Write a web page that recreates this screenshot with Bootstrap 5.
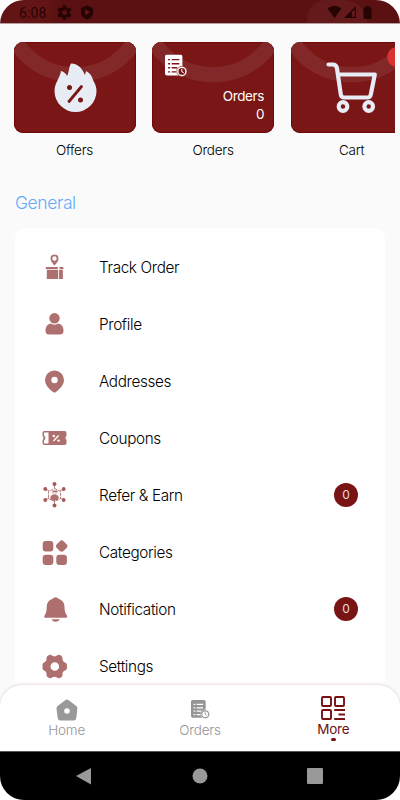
<!DOCTYPE html>
<html lang="en">
<head>
<meta charset="utf-8">
<meta name="viewport" content="width=device-width, initial-scale=1">
<title>More</title>
<link href="https://cdn.jsdelivr.net/npm/bootstrap@5.3.0/dist/css/bootstrap.min.css" rel="stylesheet">
<style>
body{font-family:Inter,"Liberation Sans",sans-serif;font-weight:300;color:#000;background:#fff}
svg{display:block;flex:none}
.phone{width:400px;height:800px;border-radius:24px;background:#fafafa}
.status{height:24px;background:linear-gradient(100deg,#631515 0 11%,#5b1111 15%);border-bottom:1px solid #b79f9f;color:#260404;font:400 14px Roboto,sans-serif;padding:2px 0 0 19px}
.status .clock{width:37px;line-height:22px;letter-spacing:.1px}
.glow{left:307px;top:0;width:60px;height:23px;background:#641a1a;border-radius:20px 24px 0 0}
.tiles{padding:17.5px 0 0 13.5px;margin-right:5px;gap:16.6px}
.tile{width:122px;flex:none}
.tile-face{height:91.5px;border-radius:9px;background:#7b1616;box-shadow:inset 0 0 0 1px #700808}
.tile-name{font-size:13.5px;line-height:20px;margin-top:7px;letter-spacing:-.22px}
.tile-info{right:10px;top:46.5px;font-size:13.5px;line-height:17.5px;font-weight:400;letter-spacing:-.35px}
.dot{width:20px;height:20px;left:96px;top:5.5px;background:#d93030}
.heading{font-size:17.5px;line-height:26px;color:#64acfa;margin:30px 0 0 15px;letter-spacing:-.4px}
.menu{margin:12px 15px 0;border-radius:11px;padding:10px 27px 0 26px;height:520px}
.entry{height:57px;padding-top:3px;font-size:15.3px;letter-spacing:-.36px}
.entry svg{margin:-3px 30px 0 0;color:#ae706f}
.count{width:24px;height:24px;margin-top:-3px;background:#781414;color:#eadada;font-size:12px;font-weight:400;letter-spacing:0}
.tabs{bottom:49px;left:0;height:66px;border-radius:22px 22px 0 0;box-shadow:0 -1px 3px #e6dadb}
.tab{width:133.33px;color:#959595;font-size:13.5px;line-height:19px;letter-spacing:-.2px}
.tab.current{color:#701014;line-height:17px}
.pip{width:5px;height:3px;background:#781014}
.system{bottom:0;left:0;height:49px;background:#000;border-top:1px solid #555}
</style>
<script src="https://cdn.jsdelivr.net/npm/bootstrap@5.3.0/dist/js/bootstrap.bundle.min.js"></script>
</head>
<body>
<svg width="0" height="0" class="position-absolute">
<symbol id="orders" viewBox="0 0 22 22"><path fill="currentColor" d="M2 0h13q2 0 2 2v10.2A5 5 0 0 0 13.5 20.500H2q-2 0-2-2V2Q0 0 2 0z"/><g stroke="var(--gap)" stroke-width="1.400"><path d="M3 5h2M6.500 5h7.500M3 9h2M6.500 9h7.500M3 13h2M6.500 13h5.500M3 17h2M6.500 17h4.500"/></g><circle cx="16.500" cy="16.500" r="5" fill="currentColor" stroke="var(--gap)" stroke-width=".6"/><circle cx="16.500" cy="16.500" r="3.300" fill="var(--gap)"/><path d="M16.500 14v2.700l1.800 1.300" fill="none" stroke="currentColor"/></symbol>
<symbol id="ring" viewBox="0 0 122 92"><circle cx="61" cy="-37" r="70" fill="none" stroke="#832828" stroke-width="15.500"/></symbol>
</svg>
<div class="phone position-relative overflow-hidden">
  <header class="status position-relative d-flex">
    <div class="glow position-absolute"></div>
    <span class="clock">6:08</span>
    <svg style="margin:3px 0 0 1px" width="15" height="15" viewBox="4 3 18 18"><path fill="#260404" fill-rule="evenodd" d="M19.400 13c.1-.7.1-1.300 0-2l2.100-1.600-2-3.500-2.500 1a8 8 0 0 0-1.700-1L15 3.300h-4l-.4 2.600a8 8 0 0 0-1.700 1l-2.400-1-2 3.500L6.600 11c-.1.700-.1 1.300 0 2l-2.100 1.600 2 3.500 2.400-1a8 8 0 0 0 1.700 1l.4 2.600h4l.3-2.600a8 8 0 0 0 1.700-1l2.500 1 2-3.500zM13 9a3 3 0 1 1 0 6 3 3 0 0 1 0-6z"/></svg>
    <svg style="margin-left:8px" width="14" height="20" viewBox="0 0 14 20"><path fill="#260404" d="M7 3.500 13 6v4.500q0 4.800-6 7-6-2.200-6-7V6z"/><path fill="#691616" d="m5.200 7.200 5 3-5 3z"/></svg>
    <svg class="position-absolute" style="left:326px;top:3px" width="48" height="18" viewBox="0 0 48 18"><g fill="#260404"><path d="M1.500 5.500q7-5.500 14 0L8.500 15z"/><path fill-rule="evenodd" d="M30 3v12H18zM28.800 6v7.800h-3V9z"/><path d="M37.500 4.500h2V3h4v1.500h2V16h-8z"/></g></svg>
  </header>

  <main>
    <section class="tiles d-flex overflow-hidden">
      <div class="tile text-center">
        <div class="tile-face position-relative overflow-hidden">
          <svg width="122" height="91.500"><use href="#ring"/><path fill="#e7ecf5" d="M40.500 49C40.500 41 46 36 47 29c3 1 5 2.500 6 5C55 31 55 24 57 21.500c8 .5 11 5 14 11.500l1-4c6 3 6 7 7.500 10 1.800 3 3 6 3 10A21 21 0 0 1 40.500 49z"/><path stroke="#7b1616" stroke-width="2.800" stroke-linecap="round" d="M55 59.500 67.500 44.500"/><g fill="#7b1616"><circle cx="55.500" cy="45.500" r="2.500"/><circle cx="66.500" cy="58" r="2.500"/></g></svg>
        </div>
        <div class="tile-name">Offers</div>
      </div>
      <div class="tile text-center">
        <div class="tile-face position-relative overflow-hidden text-white">
          <svg width="122" height="91.500" style="--gap:#7b1616"><use href="#ring"/><use href="#orders" x="13" y="12.500" width="22.500" height="22.500"/></svg>
          <div class="tile-info position-absolute text-end">Orders<br>0</div>
        </div>
        <div class="tile-name">Orders</div>
      </div>
      <div class="tile text-center">
        <div class="tile-face position-relative overflow-hidden">
          <svg width="122" height="91.500"><use href="#ring"/><g fill="none" stroke="#e7ecf5" stroke-width="4.200" stroke-linecap="round" stroke-linejoin="round"><path d="M37.500 22.500h4q4 0 4.500 4l3.800 26q.4 3 3.500 3h23q3 0 3.500-3l4-20H47"/><circle cx="52" cy="64.500" r="4.300"/><circle cx="77.700" cy="64.500" r="4.300"/></g></svg>
          <span class="dot position-absolute rounded-circle"></span>
        </div>
        <div class="tile-name">Cart</div>
      </div>
    </section>

    <h1 class="heading fw-light">General</h1>
    <div class="menu bg-white">
      <div class="entry d-flex align-items-center">
        <svg width="28" height="28" viewBox="0 0 28 28" fill="currentColor"><path fill-rule="evenodd" d="M13.500 1.500a4 4 0 0 1 4 4q0 3-4 7-4-4-4-7a4 4 0 0 1 4-4zm0 1.800a2.200 2.200 0 1 0 0 4.400 2.200 2.200 0 0 0 0-4.400z"/><path d="M5 14h12l-.5 2H4.500zM18.300 14H22l.8 2h-4zM5.800 16.700h11.400V26H5.800zM18.100 16.700h3.800V26h-3.800z"/></svg>Track Order
      </div>
      <div class="entry d-flex align-items-center">
        <svg width="28" height="28" viewBox="0 0 28 28" fill="currentColor"><circle cx="13.500" cy="8.200" r="5.200"/><path d="M10 13.500q3.500 2.500 7 0 5.500.5 5.500 7.500 0 3.500-4 3.500h-10q-4 0-4-3.500 0-7 5.500-7.500z"/></svg>Profile
      </div>
      <div class="entry d-flex align-items-center">
        <svg width="28" height="28" viewBox="0 0 28 28" fill="currentColor"><path fill-rule="evenodd" d="M13.500 3.500a9.500 9.500 0 0 1 9.500 9.500c0 5-4 8.700-8 12q-1.500 1.200-3 0c-4-3.300-8-7-8-12a9.500 9.500 0 0 1 9.500-9.500zm0 6.300a3.200 3.200 0 1 0 0 6.400 3.200 3.200 0 0 0 0-6.400z"/></svg>Addresses
      </div>
      <div class="entry d-flex align-items-center">
        <svg width="28" height="28" viewBox="0 0 28 28"><path fill="currentColor" d="M3.500 7h20q2 0 2 2v3q-2 2 0 4v3q0 2-2 2h-20q-2 0-2-2v-3q2-2 0-4V9q0-2 2-2z"/><path fill="#fff" d="M3 8.500h4.500v11H3v-3q3-2.500 0-5z"/><path stroke="#fff" stroke-width="1.300" d="m12.500 17 5-5.500"/><g fill="#fff"><circle cx="12.800" cy="12" r="1.200"/><circle cx="17.600" cy="16.600" r="1.200"/></g></svg>Coupons
      </div>
      <div class="entry d-flex align-items-center">
        <svg width="28" height="28" viewBox="0 0 28 28" fill="currentColor"><g stroke="currentColor" stroke-width=".9" fill="none"><path d="M13.500 3v4.500M4.500 8 8 10M22.500 8 19 10M4.500 19 8 17M22.500 19 19 17M13.500 19v6"/><path stroke-dasharray="3 1" d="m13.500 7.500 6 3v7l-6 3-6-3v-7z"/></g><g fill="#a65858"><circle cx="13.500" cy="3" r="2"/><circle cx="4.300" cy="8" r="1.900"/><circle cx="22.700" cy="8" r="1.900"/><circle cx="4.300" cy="19" r="1.900"/><circle cx="22.700" cy="19" r="1.900"/><circle cx="13.500" cy="24.500" r="2"/></g><path d="M11.500 9.500h5v1.800h-5zM9.300 17q0-3 2.500-3h3.400q2.500 0 2.500 3l-1.200 2.500h-6z"/><path d="M12 11v2.500h3V11" fill="none" stroke="currentColor" stroke-width=".6"/></svg>Refer &amp; Earn
        <span class="count rounded-circle d-flex align-items-center justify-content-center ms-auto">0</span>
      </div>
      <div class="entry d-flex align-items-center">
        <svg width="28" height="28" viewBox="0 0 28 28" fill="currentColor"><rect x="1.700" y="3" width="10.600" height="10.600" rx="3"/><rect x="1.700" y="16.800" width="10.600" height="10.200" rx="3"/><rect x="15.300" y="16.800" width="10.600" height="10.200" rx="3"/><rect x="15.900" y="3.300" width="9.600" height="9.600" rx="3" transform="rotate(45 20.700 8.100)"/></svg>Categories
      </div>
      <div class="entry d-flex align-items-center">
        <svg width="28" height="28" viewBox="0 0 28 28" fill="currentColor"><path d="M14.500 2.200q2 0 3 1.500 6 2 6 8 0 6 2.500 8.800.8 2.200-1 2.200H4.500q-2 0-1-2.200Q5.700 17.700 5.700 11.700q0-6 6-8Q12.500 2.200 14.500 2.200zM10.500 24.300h8.300q-1.300 2.500-4.200 2.500t-4.100-2.500z"/></svg>Notification
        <span class="count rounded-circle d-flex align-items-center justify-content-center ms-auto">0</span>
      </div>
      <div class="entry d-flex align-items-center">
        <svg width="28" height="28" viewBox="0 0 28 28" fill="currentColor"><path fill-rule="evenodd" d="M8 2.600q1.500-.9 3 .3 2.500 1.800 5 0 1.500-1.200 3-.3l1.500.9q1.300 1 1 2.500-.3 2.800 2.500 4 2 .7 2 2.200v3.600q0 1.500-2 2.200-2.800 1.200-2.500 4 .3 1.500-1 2.500l-1.500.9q-1.500.9-3-.3-2.500-1.800-5 0-1.500 1.200-3 .3l-1.500-.9q-1.300-1-1-2.500.3-2.800-2.500-4-1.500-.7-1.500-2.200v-3.600q0-1.500 1.500-2.200 2.800-1.200 2.500-4-.3-1.500 1-2.500zm5.800 7.100a4.300 4.300 0 1 0 0 8.600 4.300 4.300 0 0 0 0-8.600z" transform="translate(0 .5)"/></svg>Settings
      </div>
    </div>
  </main>

  <nav class="tabs position-absolute w-100 bg-white d-flex">
    <div class="tab d-flex flex-column align-items-center pt-3">
      <svg style="margin-top:-2px" width="22" height="22" viewBox="0 0 22 22"><path fill="#999" fill-rule="evenodd" d="M9.300 1.200q1.700-1.200 3.400 0l7.300 5.600q1.600 1.200 1.400 3L20.300 19q-.4 2.500-2.800 2.500h-13Q2.100 21.500 1.700 19L.5 9.800q-.2-1.800 1.400-3zM11 9.200a2.800 2.800 0 1 0 0 5.600 2.800 2.800 0 0 0 0-5.600z"/></svg>
      <span>Home</span>
    </div>
    <div class="tab d-flex flex-column align-items-center pt-3">
      <svg style="--gap:#fff;margin:-1px -2px 0 0" width="19" height="21"><use href="#orders" y="0" width="19" height="19"/></svg>
      <span>Orders</span>
    </div>
    <div class="tab current d-flex flex-column align-items-center">
      <svg style="margin-top:10px" width="26" height="26" viewBox="0 0 26 26" fill="none" stroke="#781014" stroke-width="1.900"><rect x="2" y="2" width="9" height="9" rx="1"/><rect x="15" y="2" width="9" height="9" rx="1"/><rect x="2" y="15" width="9" height="9" rx="1"/><path d="M14.200 15H25M18.500 19.500H25M14.200 24H25"/></svg>
      <span class="fw-normal">More</span>
      <span class="pip rounded-pill"></span>
    </div>
  </nav>
  <footer class="system position-absolute w-100">
    <svg width="400" height="48" viewBox="0 0 400 48" fill="#999"><path d="M76 24 91 16v16.500z"/><circle cx="200" cy="24" r="7.500"/><rect x="307" y="16" width="16" height="16" rx="1"/></svg>
  </footer>
</div>
</body>
</html>
